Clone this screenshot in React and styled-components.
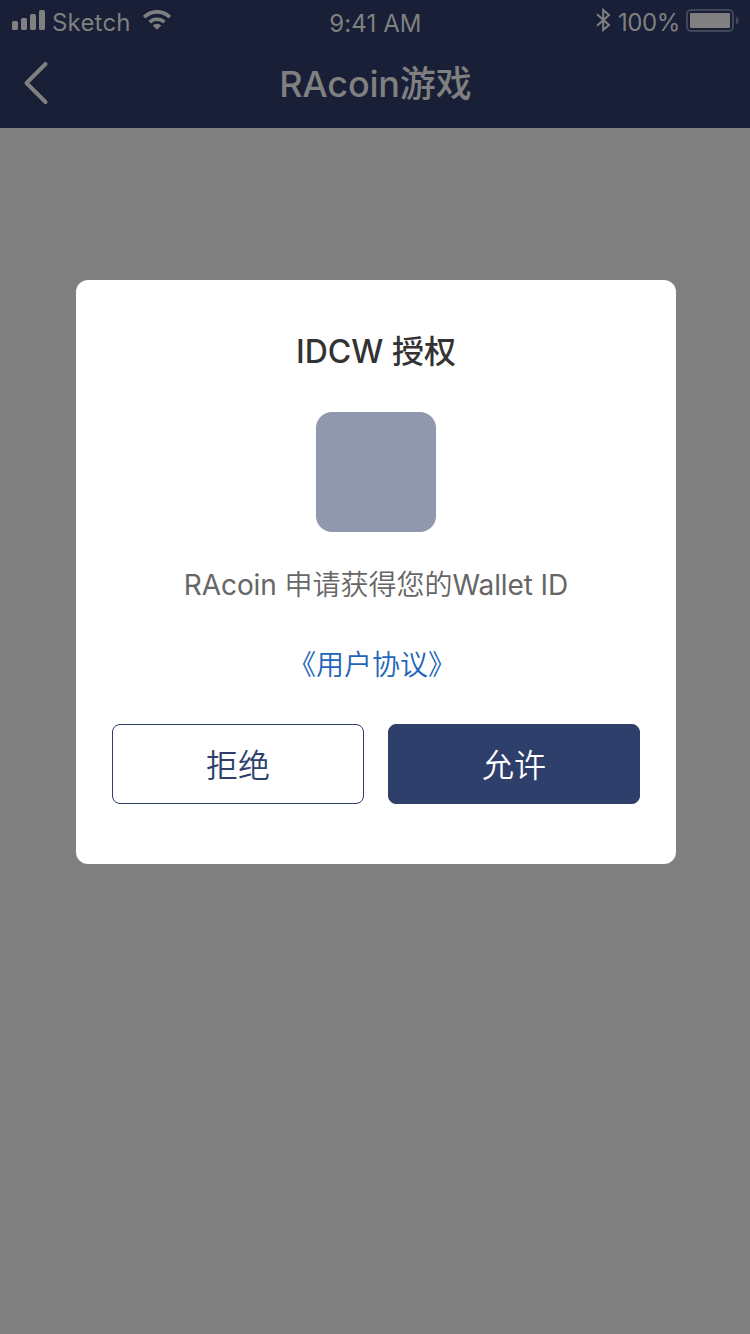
import React from "react";
import styled, { createGlobalStyle } from "styled-components";

const GlobalStyle = createGlobalStyle`
  * { box-sizing: border-box; }
  body { margin: 0; background: #808080; }
`;

const Screen = styled.main`
  width: 750px;
  height: 1334px;
  background: #808080;
  font-family: Inter, "Noto Sans CJK SC", sans-serif;
  overflow: hidden;
`;

const Header = styled.header`
  height: 128px;
  background: #181f36;
  color: #808080;
`;

const StatusBar = styled.div`
  height: 40px;
  display: grid;
  grid-template-columns: 1fr auto 1fr;
  padding: 0 11px 0 12px;
  font-size: 24px;
  line-height: 28px;
`;

const StatusGroup = styled.div`
  display: flex;
  align-items: flex-start;
  justify-content: ${(p) => (p.$end ? "flex-end" : "flex-start")};
`;

const StatusText = styled.span`
  padding-top: ${(p) => p.$top || 9}px;
  margin-left: ${(p) => p.$left || 0}px;
  letter-spacing: ${(p) => p.$track || 0}px;
  white-space: nowrap;
`;

const Icon = styled.svg`
  display: block;
  flex: none;
  margin-top: ${(p) => p.$top || 0}px;
  margin-left: ${(p) => p.$left || 0}px;
`;

const NavBar = styled.div`
  height: 88px;
  display: grid;
  grid-template-columns: 80px 1fr 80px;
`;

const BackButton = styled.button`
  border: 0;
  padding: 0 0 2px 24px;
  background: none;
  color: inherit;
`;

const BackIcon = styled.svg`
  display: block;
`;

const NavTitle = styled.h1`
  margin: 0;
  padding-left: 1px;
  font-size: 36px;
  font-weight: 500;
  line-height: 88px;
  text-align: center;
  white-space: nowrap;
`;

const Latin = styled.span`
  font-weight: ${(p) => p.$weight || "inherit"};
  letter-spacing: ${(p) => p.$track}px;
`;

const Dialog = styled.section`
  width: 600px;
  height: 584px;
  margin: 152px 0 0 76px;
  padding: 49px 36px 0;
  border-radius: 12px;
  background: #fff;
  display: flex;
  flex-direction: column;
  align-items: center;
`;

const DialogTitle = styled.h2`
  margin: 0;
  font-size: 32px;
  font-weight: 500;
  line-height: 46px;
  color: #333;
  white-space: nowrap;
`;

const AppLogo = styled.div`
  width: 120px;
  height: 120px;
  margin-top: 37px;
  border-radius: 16px;
  background: #9098ae;
`;

const Message = styled.p`
  margin: 33px 0 0;
  font-size: 28px;
  font-weight: 350;
  line-height: 40px;
  color: #666;
  white-space: nowrap;
`;

const Agreement = styled.a`
  margin-top: 40px;
  padding-right: 8px;
  font-size: 28px;
  font-weight: 350;
  line-height: 40px;
  color: #2265b9;
  white-space: nowrap;
`;

const Actions = styled.div`
  width: 100%;
  margin-top: 39px;
  display: flex;
  gap: 24px;
`;

const ActionButton = styled.button`
  flex: 1;
  height: 80px;
  padding: 0 0 2px;
  border: 1px solid #2f3f6b;
  border-radius: 8px;
  font-family: "Noto Sans CJK SC", sans-serif;
  font-size: 32px;
  font-weight: 350;
  line-height: 76px;
  color: ${(p) => (p.$primary ? "#fff" : "#2f3f6b")};
  background: ${(p) => (p.$primary ? "#2f3f6b" : "#fff")};
`;

const SignalIcon = () => (
  <Icon $top={10} width="34" height="20" viewBox="0 0 34 20" fill="currentColor">
    <rect x="0" y="11" width="6" height="9" rx="1.6" />
    <rect x="9" y="8" width="6" height="12" rx="1.6" />
    <rect x="18" y="4" width="6" height="16" rx="1.6" />
    <rect x="27" y="0" width="6" height="20" rx="1.6" />
  </Icon>
);

const WifiIcon = () => (
  <Icon $top={10} $left={12} width="28" height="20" viewBox="0 0 28 20">
    <g fill="none" stroke="currentColor" strokeWidth="3.7">
      <path d="M1.2 7.1A18.2 18.2 0 0 1 26.8 7.1" />
      <path d="M6.6 12.2A10.8 10.8 0 0 1 21.4 12.2" />
    </g>
    <path d="M14 19.8L9.7 15.5A6.1 6.1 0 0 1 18.3 15.5Z" fill="currentColor" />
  </Icon>
);

const BluetoothIcon = () => (
  <Icon $top={8} width="15" height="24" viewBox="0 0 15 24" fill="none" stroke="currentColor" strokeWidth="2">
    <path d="M1 6.3L13 17L7.2 22V2L13 7L1 17.7" />
  </Icon>
);

const BatteryIcon = () => (
  <Icon $top={9} $left={6} width="53" height="23" viewBox="0 0 53 23">
    <rect x="1" y="1" width="46" height="21" rx="4" fill="none" stroke="#414759" strokeWidth="2" />
    <rect x="4" y="4" width="40" height="15" rx="1" fill="currentColor" />
    <path d="M50 7.5C53.7 9 53.7 14 50 15.5Z" fill="#414759" />
  </Icon>
);

export default function App() {
  return (
    <Screen>
      <GlobalStyle />
      <Header>
        <StatusBar>
          <StatusGroup>
            <SignalIcon />
            <StatusText $left={6} $track={0.2}>Sketch</StatusText>
            <WifiIcon />
          </StatusGroup>
          <StatusText $top={10} $track={0.1}>9:41 AM</StatusText>
          <StatusGroup $end>
            <BluetoothIcon />
            <StatusText $left={7} $track={-0.4}>100%</StatusText>
            <BatteryIcon />
          </StatusGroup>
        </StatusBar>
        <NavBar>
          <BackButton aria-label="返回">
            <BackIcon width="24" height="42" viewBox="0 0 24 42" fill="none" stroke="currentColor" strokeWidth="3.9" strokeLinecap="round" strokeLinejoin="round">
              <path d="M21.5 2L2.5 21L21.5 40" />
            </BackIcon>
          </BackButton>
          <NavTitle><Latin $track={-0.2}>RAcoin</Latin>游戏</NavTitle>
        </NavBar>
      </Header>
      <Dialog>
        <DialogTitle><Latin $track={0}>IDCW </Latin>授权</DialogTitle>
        <AppLogo />
        <Message>
          <Latin $weight={400} $track={-0.1}>RAcoin </Latin>申请获得您的<Latin $weight={400} $track={-0.1}>Wallet ID</Latin>
        </Message>
        <Agreement>《用户协议》</Agreement>
        <Actions>
          <ActionButton>拒绝</ActionButton>
          <ActionButton $primary>允许</ActionButton>
        </Actions>
      </Dialog>
    </Screen>
  );
}
